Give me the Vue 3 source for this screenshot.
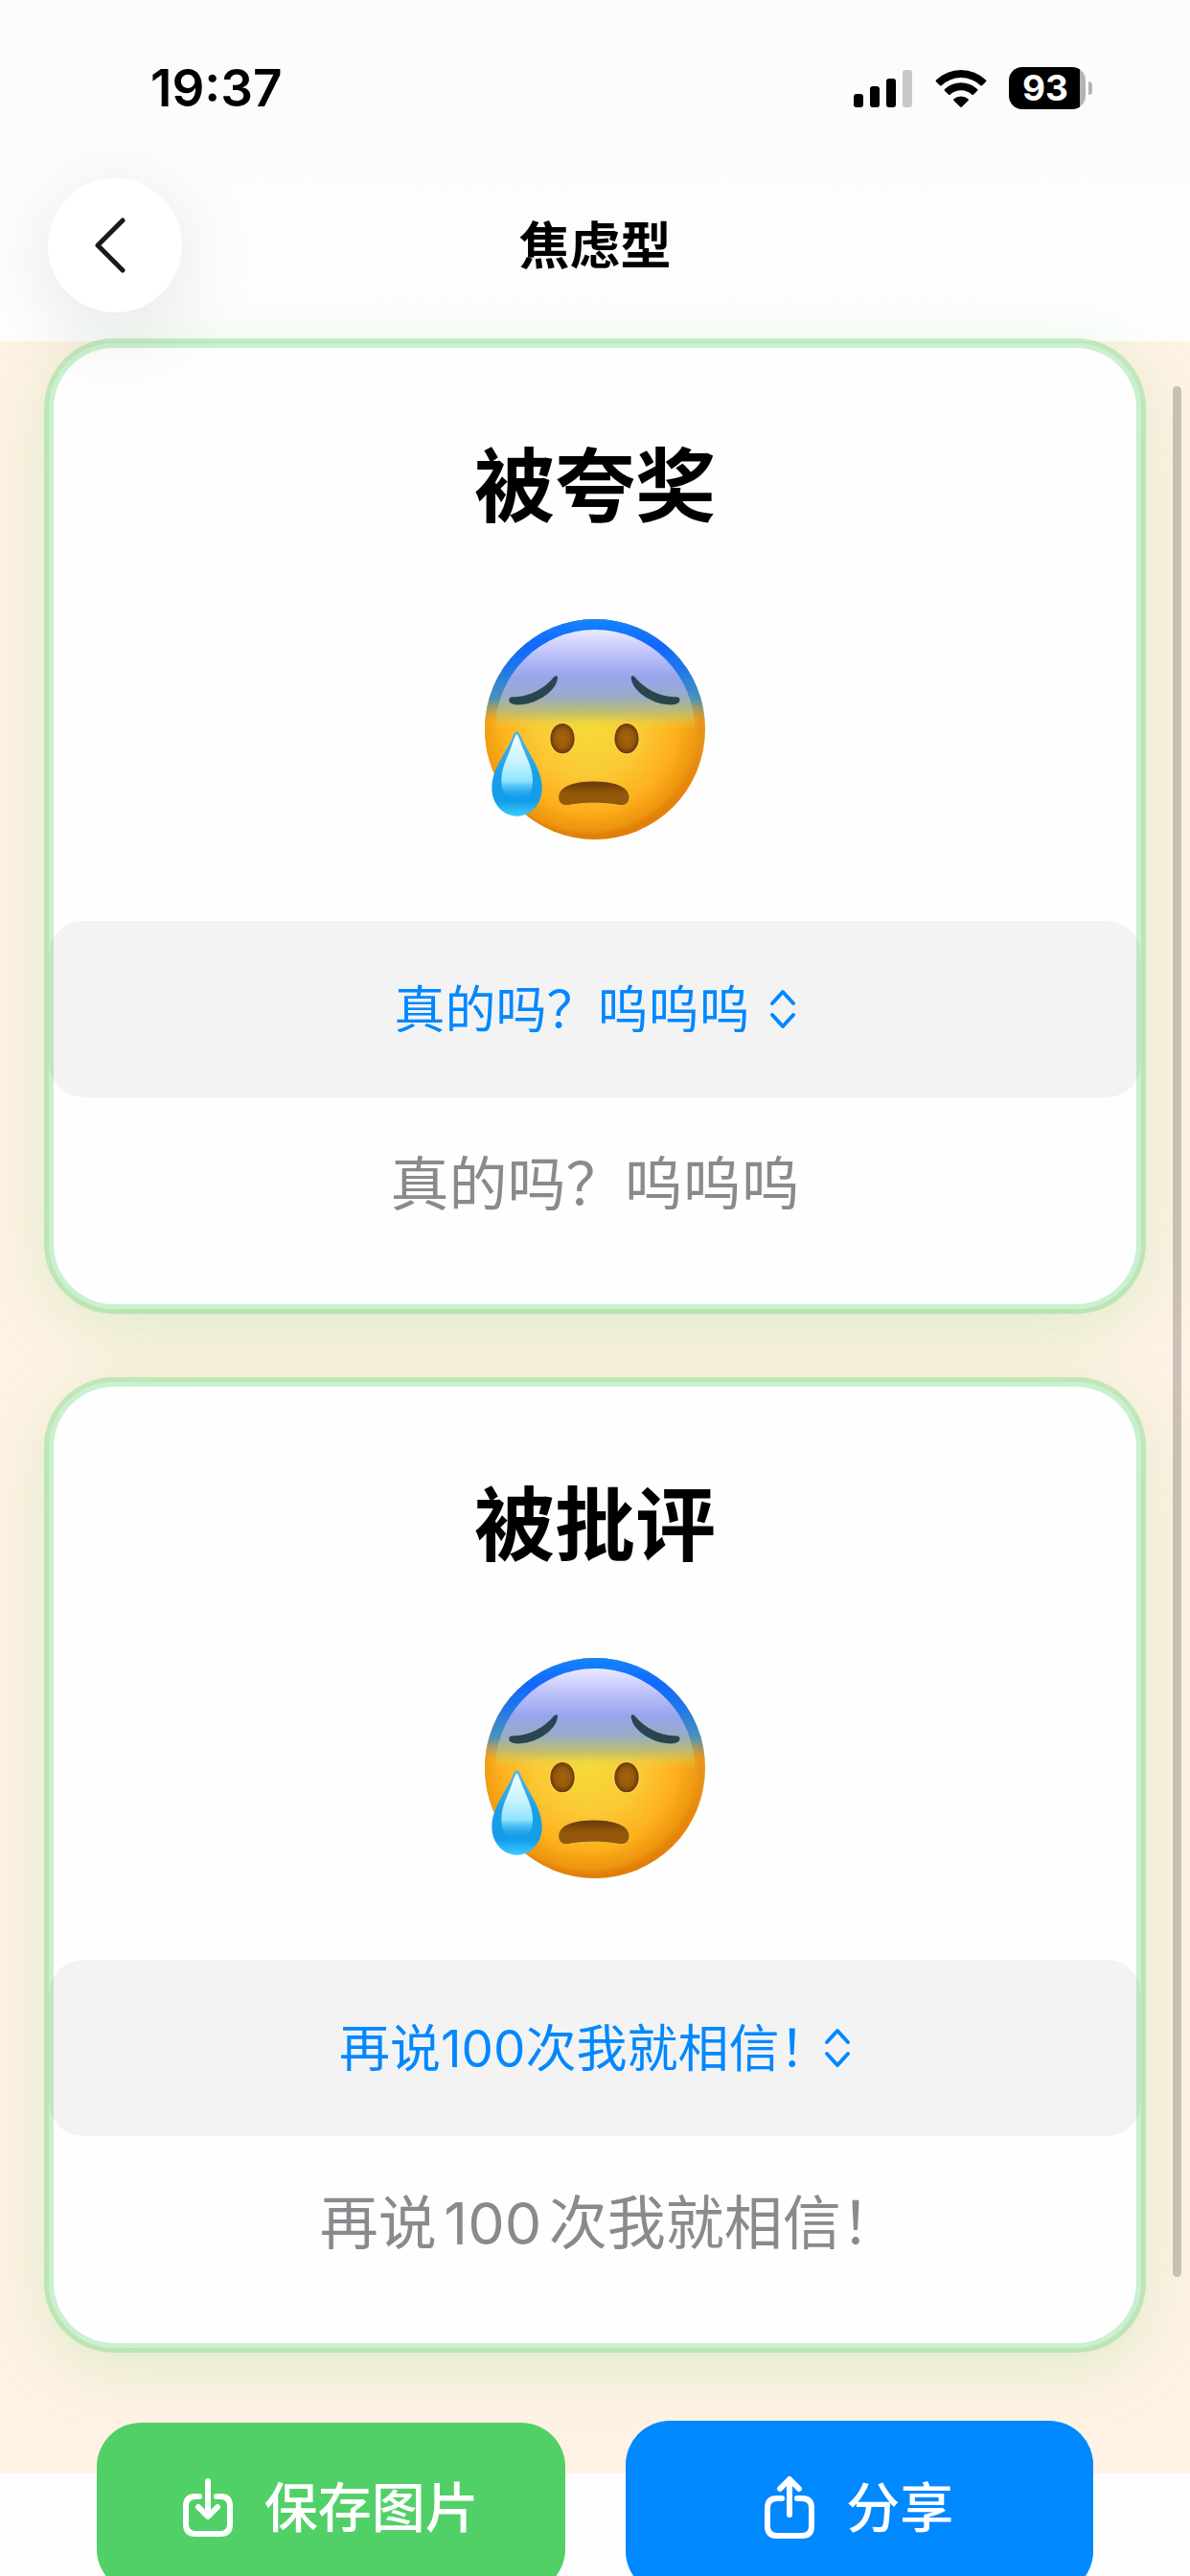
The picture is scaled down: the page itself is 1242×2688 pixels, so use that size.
<script setup>
import { ref } from 'vue'

const options = ['真的吗？呜呜呜', '再说100次我就相信！', '是不是我不够好？']

const cards = ref([
  { id: 'praise', title: '被夸奖', reply: '真的吗？呜呜呜' },
  { id: 'criticism', title: '被批评', reply: '再说100次我就相信！' }
])

// a closing ！ only takes half of its box
const endsTight = (text) => text.endsWith('！')
</script>

<template>
  <div class="screen">
    <header class="header">
      <div class="status-bar">
        <span class="time">19:37</span>
        <div class="status-icons">
          <svg class="signal" viewBox="0 0 62 39">
            <rect x="0" y="25" width="10" height="14" rx="3" />
            <rect x="17" y="17" width="10" height="22" rx="3" />
            <rect x="34" y="9" width="10" height="30" rx="3" />
            <rect x="51" y="0" width="10" height="39" rx="3" fill="#c8c8c8" />
          </svg>
          <svg class="wifi" viewBox="0 0 54 39">
            <path d="M1 10.500a37.500 37.500 0 0 1 52 0q.8.9 0 1.800L49 16.200q-.8.700-1.600 0a29.500 29.500 0 0 0-40.800 0q-.8.700-1.600 0L1 12.300q-.8-.9 0-1.800z" />
            <path d="M10 20a25 25 0 0 1 34 0q.8.900 0 1.700l-4 4q-.8.700-1.600 0a16.500 16.500 0 0 0-22.800 0q-.8.700-1.600 0l-4-4q-.8-.8 0-1.700z" />
            <path d="M19.500 30.200a11.500 11.500 0 0 1 15 0q.8.900 0 1.700l-6.600 6.600q-.9.800-1.800 0l-6.600-6.600q-.8-.8 0-1.700z" />
          </svg>
          <div class="battery">
            <span class="battery-body">93</span>
            <span class="battery-cap"></span>
          </div>
        </div>
      </div>
      <nav class="nav-bar">
        <button class="back" type="button" aria-label="返回">
          <svg viewBox="0 0 36 62">
            <path d="M31 5 5 31l26 26" />
          </svg>
        </button>
        <h1>焦虑型</h1>
      </nav>
    </header>

    <main class="cards">
      <section v-for="card in cards" :key="card.id" class="card">
        <h2 :id="card.id">{{ card.title }}</h2>
        <svg class="emoji" viewBox="75 78 690 690">
          <defs>
            <linearGradient :id="card.id + '-rim'" x1="0" y1="0" x2="0" y2="1">
              <stop offset="0" stop-color="#1592ff" />
              <stop offset=".2" stop-color="#1a84f2" />
              <stop offset=".33" stop-color="#4590b8" />
              <stop offset=".44" stop-color="#e9a02c" />
              <stop offset=".7" stop-color="#e98c0c" />
              <stop offset="1" stop-color="#e07c08" />
            </linearGradient>
            <radialGradient :id="card.id + '-face'" cx="400" cy="400" r="370" gradientUnits="userSpaceOnUse">
              <stop offset="0" stop-color="#f6dc38" />
              <stop offset=".45" stop-color="#fbc935" />
              <stop offset=".75" stop-color="#fdb01c" />
              <stop offset=".92" stop-color="#f09a10" stop-opacity=".8" />
              <stop offset="1" stop-color="#d87808" stop-opacity="0" />
            </radialGradient>
            <linearGradient :id="card.id + '-edge'" x1="0" y1="78" x2="0" y2="400" gradientUnits="userSpaceOnUse">
              <stop offset="0" stop-color="#1286ff" />
              <stop offset=".25" stop-color="#1268ff" />
              <stop offset=".5" stop-color="#2078e8" />
              <stop offset=".78" stop-color="#4a94b8" />
              <stop offset="1" stop-color="#c0a060" stop-opacity="0" />
            </linearGradient>
            <linearGradient :id="card.id + '-brow'" x1="0" y1="110" x2="0" y2="425" gradientUnits="userSpaceOnUse">
              <stop offset="0" stop-color="#ecebff" />
              <stop offset=".25" stop-color="#bcc0fa" />
              <stop offset=".48" stop-color="#97a4ec" />
              <stop offset=".66" stop-color="#9aabca" />
              <stop offset=".84" stop-color="#c2c26c" stop-opacity=".8" />
              <stop offset="1" stop-color="#f0d840" stop-opacity="0" />
            </linearGradient>
            <radialGradient :id="card.id + '-eye'">
              <stop offset="0" stop-color="#a5640a" />
              <stop offset=".6" stop-color="#985a0a" />
              <stop offset="1" stop-color="#6a380c" />
            </radialGradient>
            <linearGradient :id="card.id + '-mouth'" x1="0" y1="0" x2="0" y2="1">
              <stop offset="0" stop-color="#65360c" />
              <stop offset=".5" stop-color="#935708" />
              <stop offset="1" stop-color="#945a0c" />
            </linearGradient>
            <linearGradient :id="card.id + '-drop'" x1="0" y1="0" x2="0" y2="1">
              <stop offset="0" stop-color="#52b6e6" />
              <stop offset=".5" stop-color="#189fe8" />
              <stop offset=".82" stop-color="#149ceb" />
              <stop offset="1" stop-color="#3ccbff" />
            </linearGradient>
            <linearGradient :id="card.id + '-shine'" x1="0" y1="0" x2="0" y2="1">
              <stop offset="0" stop-color="#f4feff" />
              <stop offset=".45" stop-color="#c4f2ff" />
              <stop offset=".72" stop-color="#8fe4ff" />
              <stop offset="1" stop-color="#20a8f0" stop-opacity="0" />
            </linearGradient>
          </defs>
          <circle cx="420" cy="423" r="345" :fill="`url(#${card.id}-rim)`" />
          <circle cx="420" cy="423" r="345" :fill="`url(#${card.id}-face)`" />
          <circle cx="420" cy="423" r="345" :fill="`url(#${card.id}-edge)`" />
          <ellipse cx="420" cy="428" rx="313" ry="317" :fill="`url(#${card.id}-brow)`" />
          <path d="M151 328c-3 14 12 20 38 18 53-5 110-42 114-84 1-7-7-8-11-3-31 38-76 61-124 63-10 0-15 1-17 6z" fill="#29464e" />
          <path d="M685 328c3 14-12 20-38 18-53-5-110-42-114-84-1-7 7-8 11-3 31 38 76 61 124 63 10 0 15 1 17 6z" fill="#29464e" />
          <ellipse cx="318" cy="453" rx="41" ry="49" fill="#ffe04a" />
          <ellipse cx="519" cy="453" rx="41" ry="49" fill="#ffe04a" />
          <ellipse cx="318" cy="452" rx="38" ry="47" :fill="`url(#${card.id}-eye)`" />
          <ellipse cx="519" cy="452" rx="38" ry="47" :fill="`url(#${card.id}-eye)`" />
          <path d="M305 634c2-31 43-49 111-49s110 18 112 49c1 20-15 32-34 27-52-9-104-9-156 0-19 4-34-7-33-27z" :fill="`url(#${card.id}-mouth)`" stroke="#f8c030" stroke-width="3" />
          <path d="M175 430c7 0 10 9 14 18 22 50 65 100 65 159 0 51-35 88-78 88s-79-37-79-88c0-59 43-109 65-159 4-9 7-18 13-18z" :fill="`url(#${card.id}-drop)`" />
          <path d="M175 438c8 10 13 30 22 50 12 29 28 60 28 94 0 44-20 60-49 60s-49-16-49-60c0-34 15-65 27-94 8-20 13-40 21-50z" :fill="`url(#${card.id}-shine)`" />
        </svg>
        <label class="picker">
          <select v-model="card.reply" :aria-labelledby="card.id" :class="{ tight: endsTight(card.reply) }">
            <option v-for="option in options" :key="option" :value="option">{{ option }}</option>
          </select>
          <svg viewBox="0 0 28 42">
            <path d="M3 15 14 3l11 12M3 27l11 12 11-12" />
          </svg>
        </label>
        <p class="reply" :class="{ tight: endsTight(card.reply) }">{{ card.reply }}</p>
      </section>
    </main>

    <footer class="actions">
      <button class="action save" type="button">
        <svg viewBox="0 0 52 62">
          <path d="M17 19h-4q-10 0-10 10v19q0 10 10 10h26q10 0 10-10V29q0-10-10-10h-4M26 3v36M16 30l10 10 10-10" />
        </svg>
        保存图片
      </button>
      <button class="action share" type="button">
        <svg viewBox="0 0 52 66">
          <path d="M18 23h-5q-10 0-10 10v19q0 10 10 10h26q10 0 10-10V33q0-10-10-10h-5M26 4v36M16 13 26 3l10 10" />
        </svg>
        分享
      </button>
    </footer>

    <div class="scroll-thumb"></div>
  </div>
</template>

<style>
body {
  background: #fefefe;
}
</style>

<style scoped>
.screen {
  position: relative;
  height: 100vh;
  overflow: hidden;
  background: linear-gradient(#fbfbfb, #fefefe 356px);
  font-family: Inter, "Noto Sans CJK SC", sans-serif;
  color: #000;
}

h1,
h2,
p {
  margin: 0;
}

button,
select {
  border: none;
  font-family: inherit;
  cursor: pointer;
}

.header {
  position: relative;
  z-index: 1;
  padding: 0 50px 30px;
}

.status-bar {
  display: flex;
  align-items: center;
  justify-content: space-between;
  height: 184px;
  padding: 0 52px 0 107px;
}

.time {
  font-size: 53px;
  font-weight: 600;
}

.status-icons {
  display: flex;
  align-items: center;
  gap: 23px;
}

.signal {
  width: 62px;
  height: 39px;
}

.wifi {
  width: 54px;
  height: 39px;
}

.battery {
  display: flex;
  align-items: center;
  gap: 3px;
}

.battery-body {
  width: 80px;
  border-radius: 14px;
  background: linear-gradient(to right, #000 74px, #b4b4b4 74px);
  color: #fff;
  font-size: 37px;
  font-weight: 700;
  line-height: 44px;
  text-align: center;
  text-indent: -4px;
}

.battery-cap {
  width: 4px;
  height: 14px;
  border-radius: 0 4px 4px 0;
  background: #b4b4b4;
}

.nav-bar {
  display: grid;
  grid-template-columns: 140px 1fr 140px;
  align-items: center;
  padding-top: 2px;
}

.nav-bar h1 {
  padding-top: 2px;
  font-size: 53px;
  font-weight: 600;
  line-height: 60px;
  text-align: center;
}

.back {
  display: flex;
  align-items: center;
  justify-content: center;
  width: 140px;
  height: 140px;
  padding: 0 10px 0 0;
  border-radius: 50%;
  background: #fff;
  box-shadow: 0 20px 90px rgba(0, 0, 0, 0.1);
}

.back svg {
  width: 36px;
  height: 62px;
  fill: none;
  stroke: #1a1a1a;
  stroke-width: 5;
  stroke-linecap: round;
  stroke-linejoin: round;
}

.cards {
  display: flex;
  flex-direction: column;
  gap: 76px;
  padding: 2px 51px 131px;
  background: #fff2e4;
}

.card {
  display: flex;
  flex-direction: column;
  align-items: center;
  padding: 100px 0 88px;
  border-radius: 68px;
  background: #fefefe;
  box-shadow:
    inset 0 0 0 5px rgba(80, 208, 102, 0.3),
    0 0 0 5px rgba(80, 208, 102, 0.3),
    0 15px 72px rgba(80, 208, 102, 0.22);
}

.card h2 {
  font-size: 84px;
  font-weight: 700;
  line-height: 100px;
}

.emoji {
  width: 230px;
  height: 230px;
  margin: 88px 0 85px;
}

.picker {
  display: flex;
  align-items: center;
  justify-content: center;
  gap: 20px;
  align-self: stretch;
  height: 184px;
  border-radius: 36px;
  background: rgba(0, 0, 0, 0.045);
}

.picker select {
  appearance: none;
  field-sizing: content;
  padding: 2px 0 0;
  background: none;
  color: #0088ff;
  font-size: 53px;
  line-height: 80px;
  outline: none;
}

.picker select,
.picker option,
.reply {
  text-autospace: normal;
}

.picker svg {
  width: 28px;
  height: 42px;
  fill: none;
  stroke: #0088ff;
  stroke-width: 4;
  stroke-linecap: round;
  stroke-linejoin: round;
}

.reply {
  margin-top: 49px;
  color: #8a8a8e;
  font-size: 61px;
  line-height: 84px;
}

.tight {
  font-feature-settings: "halt";
}

.actions {
  display: grid;
  grid-template-columns: 1fr 1fr;
  align-items: center;
  gap: 63px;
  margin-top: -55px;
  padding: 0 101px;
}

.action {
  display: flex;
  align-items: center;
  justify-content: center;
  gap: 33px;
  padding: 58px 0;
  border-radius: 46px;
  color: #fff;
  font-size: 56px;
  font-weight: 500;
  line-height: 62px;
}

.action svg {
  width: 52px;
  fill: none;
  stroke: #fff;
  stroke-width: 6;
  stroke-linecap: round;
  stroke-linejoin: round;
}

.save {
  background: #52d068;
}

.share {
  background: #0088ff;
}

.scroll-thumb {
  position: absolute;
  top: 15%;
  right: 9px;
  width: 9px;
  height: 73.4%;
  border-radius: 5px;
  background: rgba(0, 0, 0, 0.2);
}
</style>
